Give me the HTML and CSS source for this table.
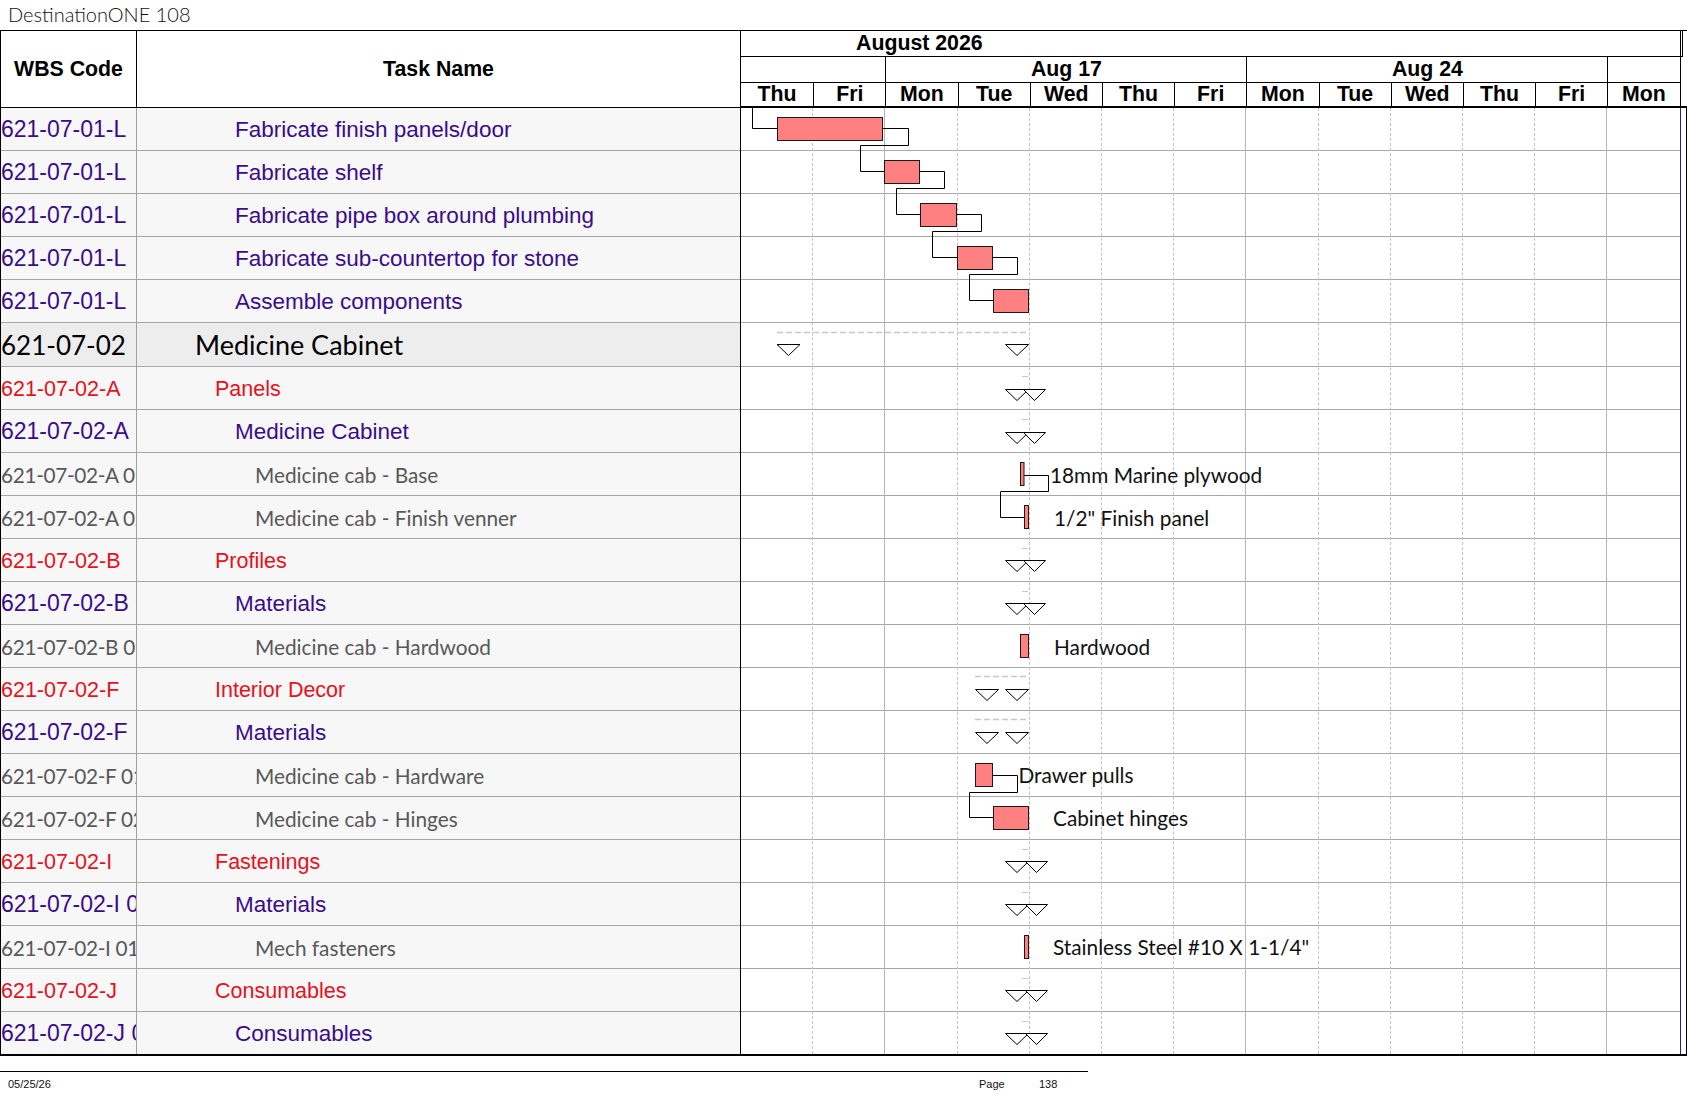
FILE: index.html
```html
<!DOCTYPE html>
<html lang="en">
<head>
<meta charset="utf-8">
<title>DestinationONE 108</title>
<link rel="stylesheet" href="styles.css">
</head>
<body>
<div class="title">DestinationONE 108</div>
<div class="table">
  <div class="left">
    <div class="lhead"><div class="c-wbs h">WBS Code</div><div class="c-task h">Task Name</div></div>
    <div class="lrow l3"><div class="c-wbs">621-07-01-L</div><div class="c-task">Fabricate finish panels/door</div></div>
    <div class="lrow l3"><div class="c-wbs">621-07-01-L</div><div class="c-task">Fabricate shelf</div></div>
    <div class="lrow l3"><div class="c-wbs">621-07-01-L</div><div class="c-task">Fabricate pipe box around plumbing</div></div>
    <div class="lrow l3"><div class="c-wbs">621-07-01-L</div><div class="c-task">Fabricate sub-countertop for stone</div></div>
    <div class="lrow l3"><div class="c-wbs">621-07-01-L</div><div class="c-task">Assemble components</div></div>
    <div class="lrow sum"><div class="c-wbs">621-07-02</div><div class="c-task">Medicine Cabinet</div></div>
    <div class="lrow l2"><div class="c-wbs">621-07-02-A</div><div class="c-task">Panels</div></div>
    <div class="lrow l3"><div class="c-wbs">621-07-02-A</div><div class="c-task">Medicine Cabinet</div></div>
    <div class="lrow l4"><div class="c-wbs">621-07-02-A 01</div><div class="c-task">Medicine cab - Base</div></div>
    <div class="lrow l4"><div class="c-wbs">621-07-02-A 02</div><div class="c-task">Medicine cab - Finish venner</div></div>
    <div class="lrow l2"><div class="c-wbs">621-07-02-B</div><div class="c-task">Profiles</div></div>
    <div class="lrow l3"><div class="c-wbs">621-07-02-B</div><div class="c-task">Materials</div></div>
    <div class="lrow l4"><div class="c-wbs">621-07-02-B 01</div><div class="c-task">Medicine cab - Hardwood</div></div>
    <div class="lrow l2"><div class="c-wbs">621-07-02-F</div><div class="c-task">Interior Decor</div></div>
    <div class="lrow l3"><div class="c-wbs">621-07-02-F</div><div class="c-task">Materials</div></div>
    <div class="lrow l4"><div class="c-wbs">621-07-02-F 01</div><div class="c-task">Medicine cab - Hardware</div></div>
    <div class="lrow l4"><div class="c-wbs">621-07-02-F 02</div><div class="c-task">Medicine cab - Hinges</div></div>
    <div class="lrow l2"><div class="c-wbs">621-07-02-I</div><div class="c-task">Fastenings</div></div>
    <div class="lrow l3"><div class="c-wbs">621-07-02-I 01</div><div class="c-task">Materials</div></div>
    <div class="lrow l4"><div class="c-wbs">621-07-02-I 01</div><div class="c-task">Mech fasteners</div></div>
    <div class="lrow l2"><div class="c-wbs">621-07-02-J</div><div class="c-task">Consumables</div></div>
    <div class="lrow l3 last"><div class="c-wbs">621-07-02-J 01</div><div class="c-task">Consumables</div></div>
  </div>
  <div class="gantt">
    <div class="ghead">
      <div class="month">August 2026</div>
      <div class="weeks"><div class="wk"></div><div class="wk">Aug 17</div><div class="wk">Aug 24</div><div class="wk"></div></div>
      <div class="days">
        <div>Thu</div><div>Fri</div><div>Mon</div><div>Tue</div><div>Wed</div><div>Thu</div><div>Fri</div>
        <div>Mon</div><div>Tue</div><div>Wed</div><div>Thu</div><div>Fri</div><div>Mon</div>
      </div>
    </div>
    <div class="gbody">
      <div class="grows">
        <div class="grow"></div><div class="grow"></div><div class="grow"></div><div class="grow"></div><div class="grow"></div>
        <div class="grow sum"></div>
        <div class="grow"></div><div class="grow"></div><div class="grow"></div><div class="grow"></div><div class="grow"></div>
        <div class="grow"></div><div class="grow"></div><div class="grow"></div><div class="grow"></div><div class="grow"></div>
        <div class="grow"></div><div class="grow"></div><div class="grow"></div><div class="grow"></div><div class="grow"></div>
        <div class="grow last"></div>
        <div class="vgrid">
          <div></div><div class="solid"></div><div></div><div></div><div></div><div></div><div class="solid"></div>
          <div></div><div></div><div></div><div></div><div class="solid"></div><div class="end"></div>
        </div>
        <svg class="overlay" width="939" height="946" viewBox="0 0 939 946">
          <g class="links">
            <path d="M11.5 0 V20.5 H36"/>
            <path d="M142 20.5 H167.5 V37.5 H119.5 V63.5 H143.5"/>
            <path d="M178.5 63.5 H203.5 V80.5 H155.5 V106.5 H179"/>
            <path d="M215.5 106.5 H240.5 V123.5 H191.5 V149.5 H216.5"/>
            <path d="M251.5 149.5 H276.5 V166.5 H228.5 V192.5 H252.5"/>
            <path d="M283 367.5 H307.5 V383.5 H259.5 V409.5 H283.5"/>
            <path d="M251.5 667.5 H276.5 V684.5 H228.5 V709.5 H252.5"/>
          </g>
          <g class="bars">
            <rect x="36.5" y="9.5" width="105" height="23"/>
            <rect x="143.5" y="52.5" width="35" height="23"/>
            <rect x="179.5" y="95.5" width="36" height="23"/>
            <rect x="216.5" y="138.5" width="35" height="23"/>
            <rect x="252.5" y="181.5" width="35" height="23"/>
            <rect x="279.5" y="354.5" width="3.5" height="23"/>
            <rect x="283.5" y="397.5" width="4" height="23"/>
            <rect x="279.5" y="526.5" width="8" height="23"/>
            <rect x="234.5" y="655.5" width="17" height="23"/>
            <rect x="252.5" y="698.5" width="35" height="23"/>
            <rect x="283.5" y="827.5" width="4" height="23"/>
          </g>
          <g class="sumline">
            <path d="M36 224.5 H288"/>
            <path d="M234 568.5 H288"/>
            <path d="M234 611.5 H288"/>
          </g>
          <g class="tick">
            <path d="M281 268.5 H287"/>
            <path d="M281 311.5 H287"/>
            <path d="M281 440.5 H287"/>
            <path d="M281 483.5 H287"/>
            <path d="M281 741.5 H287"/>
            <path d="M281 784.5 H287"/>
            <path d="M281 870.5 H287"/>
            <path d="M281 913.5 H287"/>
          </g>
          <g class="tri">
            <polygon points="36,236.5 59,236.5 47.5,247.5"/>
            <polygon points="264.5,236.5 287.5,236.5 276,247.5"/>
            <polygon points="264.5,281.5 287.5,281.5 276,292.5"/>
            <polygon points="282.5,281.5 304.5,281.5 293.5,292.5"/>
            <polygon points="264.5,324.5 287.5,324.5 276,335.5"/>
            <polygon points="282.5,324.5 304.5,324.5 293.5,335.5"/>
            <polygon points="264.5,452.5 287.5,452.5 276,463.5"/>
            <polygon points="282.5,452.5 304.5,452.5 293.5,463.5"/>
            <polygon points="264.5,495.5 287.5,495.5 276,506.5"/>
            <polygon points="282.5,495.5 304.5,495.5 293.5,506.5"/>
            <polygon points="234.5,581.5 257.5,581.5 246,592.5"/>
            <polygon points="264.5,581.5 287.5,581.5 276,592.5"/>
            <polygon points="234.5,624.5 257.5,624.5 246,635.5"/>
            <polygon points="264.5,624.5 287.5,624.5 276,635.5"/>
            <polygon points="264.5,753.5 287.5,753.5 276,764.5"/>
            <polygon points="284.5,753.5 306.5,753.5 295.5,764.5"/>
            <polygon points="264.5,796.5 287.5,796.5 276,807.5"/>
            <polygon points="284.5,796.5 306.5,796.5 295.5,807.5"/>
            <polygon points="264.5,882.5 287.5,882.5 276,893.5"/>
            <polygon points="284.5,882.5 306.5,882.5 295.5,893.5"/>
            <polygon points="264.5,925.5 287.5,925.5 276,936.5"/>
            <polygon points="284.5,925.5 306.5,925.5 295.5,936.5"/>
          </g>
          <g class="labels">
            <text x="309" y="374.5">18mm Marine plywood</text>
            <text x="313" y="418">1/2&quot; Finish panel</text>
            <text x="313" y="546.5">Hardwood</text>
            <text x="277.5" y="674.5">Drawer pulls</text>
            <text x="312" y="717.5">Cabinet hinges</text>
            <text x="312" y="847">Stainless Steel #10 X 1-1/4&quot;</text>
          </g>
        </svg>
      </div>
    </div>
  </div>
</div>
<div class="footer">
  <span class="f-date">05/25/26</span>
  <span class="f-page">Page</span>
  <span class="f-num">138</span>
</div>
</body>
</html>
```

FILE: styles.css
```css
* { box-sizing: border-box; }

body {
  margin: 0;
  background: #ffffff;
  font-family: "Liberation Sans", Arial, sans-serif;
  color: #000;
}

.title {
  height: 30px;
  padding-left: 8px;
  font-family: Lato, "Noto Sans", sans-serif;
  font-weight: 300;
  font-size: 20px;
  line-height: 28px;
  color: #111;
}

.table {
  display: flex;
  width: 1687px;
  border-top: 1px solid #000;
  border-bottom: 2px solid #000;
  border-left: 1px solid #000;
}

/* ---------- left grid ---------- */
.left {
  width: 739px;
  flex: none;
}

.lhead {
  display: flex;
  height: 77px;
  border-bottom: 1px solid #000;
}

.lhead .c-wbs,
.lhead .c-task {
  justify-content: center;
  font-weight: bold;
  font-size: 21.3px;
  color: #000;
  padding-left: 0;
}

.lhead .c-wbs { border-right: 1px solid #000; }

.lrow {
  display: flex;
  height: 43px;
  border-bottom: 1px solid #a6a6a6;
  background: #f7f7f7;
}

.lrow.sum {
  height: 44px;
  background: #ededed;
}

.lrow.last {
  height: 42px;
  border-bottom: none;
}

.c-wbs {
  width: 136px;
  flex: none;
  display: flex;
  align-items: center;
  border-right: 1px solid #a0a0a0;
  overflow: hidden;
  white-space: nowrap;
}

.c-task {
  flex: 1;
  display: flex;
  align-items: center;
  overflow: hidden;
  white-space: nowrap;
}

.l3 { color: #3a0c8a; font-size: 22.5px; }
.l3 .c-wbs { font-size: 23px; }
.l3 .c-wbs, .l3 .c-task { padding-top: 1px; }
.l3 .c-task { padding-left: 98px; }

.l2 { color: #e8101c; font-size: 21.5px; }
.l2 .c-wbs, .l2 .c-task { padding-top: 2px; }
.l2 .c-task { padding-left: 78px; }

.l4 {
  color: #585858;
  font-family: Lato, "Noto Sans", sans-serif;
  font-size: 20.8px;
}
.l4 .c-wbs, .l4 .c-task { padding-top: 1px; }
.l4 .c-wbs { letter-spacing: -0.35px; }
.l4 .c-task { padding-left: 118px; }

.sum {
  color: #000;
  font-family: Lato, "Noto Sans", sans-serif;
  font-size: 27px;
}
.sum .c-wbs { font-size: 26px; }
.sum .c-task { padding-left: 58px; }

/* ---------- gantt ---------- */
.gantt {
  flex: 1;
  border-left: 1px solid #000;
}

.ghead {
  border-bottom: 2px solid #000;
  font-weight: bold;
  font-size: 21.3px;
}

.month {
  width: 942px;
  height: 26px;
  padding-left: 115px;
  line-height: 25px;
  border-bottom: 1px solid #000;
  border-right: 3px double #000;
}

.weeks {
  display: grid;
  grid-template-columns: 144.4px 361px 361px 72.2px;
  width: 939.6px;
  height: 26px;
  border-bottom: 1px solid #000;
  border-right: 1px solid #000;
}

.wk {
  text-align: center;
  line-height: 24px;
}

.wk + .wk { border-left: 1px solid #000; }

.days {
  display: grid;
  grid-template-columns: repeat(13, 72.2px);
  width: 939.6px;
  height: 23px;
  border-right: 1px solid #000;
}

.days div {
  text-align: center;
  line-height: 23px;
}

.days div + div { border-left: 1px solid #000; }

.gbody {
  display: flex;
  height: 946px;
  border-right: 1px solid #000;
}

.grows {
  position: relative;
  width: 939.6px;
  flex: none;
  border-right: 1px solid #20209a;
}

.grow {
  height: 43px;
  border-bottom: 1px solid #a8a8a8;
}

.grow.sum { height: 44px; }
.grow.last { height: 42px; border-bottom: none; }

.vgrid {
  position: absolute;
  top: 0;
  left: 0;
  bottom: 0;
  display: grid;
  grid-template-columns: repeat(13, 72.2px);
}

.vgrid div { border-right: 1px dashed #c2c2c2; }
.vgrid div.solid { border-right: 1px solid #b4b4b4; }
.vgrid div.end { border-right: none; }

.overlay {
  position: absolute;
  top: 0;
  left: 0;
  overflow: visible;
}

.links path {
  fill: none;
  stroke: #000;
  stroke-width: 1;
}

.bars rect {
  fill: #ff8080;
  stroke: #1a1a1a;
  stroke-width: 1;
}

.sumline path {
  fill: none;
  stroke: #c8c8c8;
  stroke-width: 1.5;
  stroke-dasharray: 6 3;
}

.tick path {
  fill: none;
  stroke: #c8c8c8;
  stroke-width: 1;
}

.tri polygon {
  fill: #fff;
  stroke: #000;
  stroke-width: 1;
}

.labels text {
  font-family: Lato, "Noto Sans", sans-serif;
  font-size: 20.8px;
  fill: #111;
}

/* ---------- footer ---------- */
.footer {
  display: flex;
  width: 1088px;
  margin-top: 15px;
  padding-top: 6px;
  border-top: 1px solid #000;
  font-size: 11px;
  line-height: 13px;
  color: #111;
}

.f-date {
  width: 979px;
  padding-left: 8px;
}

.f-page { width: 60px; }
```
